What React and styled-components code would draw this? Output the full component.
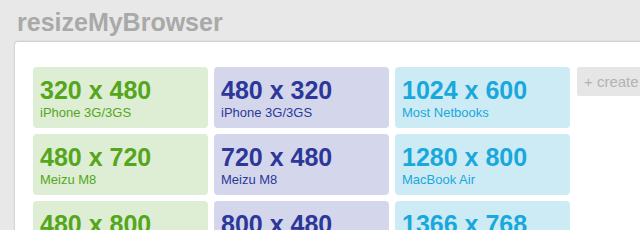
import React from "react";
import styled, { createGlobalStyle } from "styled-components";

const GlobalStyle = createGlobalStyle`
  html, body {
    margin: 0;
    padding: 0;
    background: #e8e8e8;
    overflow: hidden;
    font-family: "Liberation Sans", Arial, sans-serif;
  }
`;

const Page = styled.div`
  width: 640px;
  height: 230px;
  overflow: hidden;
`;

const Title = styled.h1`
  margin: 0;
  padding: 7px 0 0 17px;
  height: 42px;
  box-sizing: border-box;
  font-size: 25px;
  font-weight: bold;
  color: #a9a9a9;
  line-height: 30px;
`;

const Panel = styled.div`
  margin-left: 15px;
  width: 720px;
  height: 260px;
  background: #fff;
  border-radius: 3px 0 0 0;
  box-shadow: 0 -1px 2px rgba(0, 0, 0, 0.12), -1px 0 2px rgba(0, 0, 0, 0.06);
  padding: 25px 0 0 18px;
  box-sizing: border-box;
  display: flex;
  align-items: flex-start;
  gap: 7px;
`;

const Grid = styled.div`
  display: grid;
  grid-template-columns: repeat(3, 175px);
  grid-auto-rows: 61px;
  gap: 6px;
`;

const palette = {
  green: { bg: "#ddeed4", fg: "#55a61c" },
  blue: { bg: "#d4d7ec", fg: "#2c3799" },
  cyan: { bg: "#cdebf5", fg: "#19a8dc" },
};

const Card = styled.div`
  background: ${(p) => palette[p.$tone].bg};
  color: ${(p) => palette[p.$tone].fg};
  border-radius: 4px;
  padding: 10px 7px 0;
  box-sizing: border-box;
`;

const Size = styled.div`
  font-size: 25px;
  font-weight: bold;
  line-height: 27px;
`;

const Device = styled.div`
  margin-top: 1px;
  font-size: 13px;
  line-height: 15px;
`;

const Create = styled.div`
  width: 110px;
  height: 29px;
  background: #e6e6e6;
  color: #b3b3b3;
  font-size: 15px;
  line-height: 29px;
  padding-left: 7px;
  box-sizing: border-box;
  white-space: nowrap;
  border-radius: 2px;
`;

const sizes = [
  { size: "320 x 480", device: "iPhone 3G/3GS", tone: "green" },
  { size: "480 x 320", device: "iPhone 3G/3GS", tone: "blue" },
  { size: "1024 x 600", device: "Most Netbooks", tone: "cyan" },
  { size: "480 x 720", device: "Meizu M8", tone: "green" },
  { size: "720 x 480", device: "Meizu M8", tone: "blue" },
  { size: "1280 x 800", device: "MacBook Air", tone: "cyan" },
  { size: "480 x 800", device: "Nexus One", tone: "green" },
  { size: "800 x 480", device: "Nexus One", tone: "blue" },
  { size: "1366 x 768", device: "Most Laptops", tone: "cyan" },
];

export default function App() {
  return (
    <Page>
      <GlobalStyle />
      <Title>resizeMyBrowser</Title>
      <Panel>
        <Grid>
          {sizes.map((s, i) => (
            <Card key={i} $tone={s.tone}>
              <Size>{s.size}</Size>
              <Device>{s.device}</Device>
            </Card>
          ))}
        </Grid>
        <Create>+ create new</Create>
      </Panel>
    </Page>
  );
}
